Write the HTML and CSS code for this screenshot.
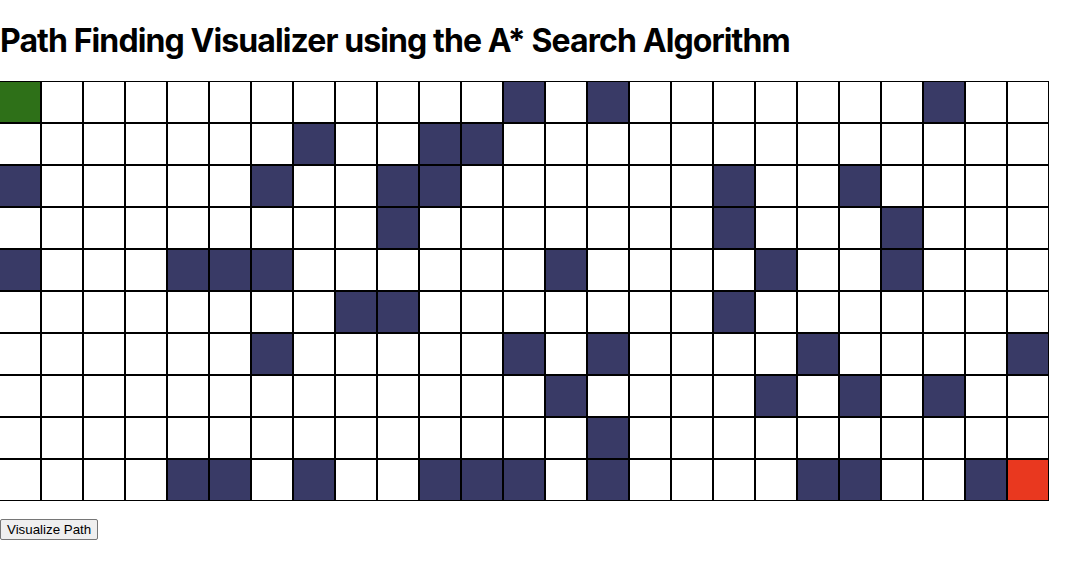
FILE: index.html
```html
<!DOCTYPE html>
<html>
<head>
<meta charset="utf-8">
<link rel="stylesheet" href="styles.css">
</head>
<body>
<h1 class="title">Path Finding Visualizer using the A* Search Algorithm</h1>
<div class="grid" id="grid"></div>
<div class="controls"><button class="btn">Visualize Path</button></div>
<script>
var walls = [
  [12,14,22],
  [7,10,11],
  [0,6,9,10,17,20],
  [9,17,21],
  [0,4,5,6,13,18,21],
  [8,9,17],
  [6,12,14,19,24],
  [13,18,20,22],
  [14],
  [4,5,7,10,11,12,14,19,20,23]
];
var g = document.getElementById('grid');
for (var r = 0; r < 10; r++) {
  var row = document.createElement('div');
  row.className = 'row';
  for (var c = 0; c < 25; c++) {
    var cell = document.createElement('div');
    cell.className = 'cell';
    if (r === 0 && c === 0) cell.className += ' start';
    else if (r === 9 && c === 24) cell.className += ' end';
    else if (walls[r].indexOf(c) >= 0) cell.className += ' wall';
    row.appendChild(cell);
  }
  g.appendChild(row);
}
</script>
</body>
</html>
```
FILE: styles.css
```css
body {
  margin: 0;
  background: #fff;
  font-family: "Liberation Sans", Arial, sans-serif;
}
.title {
  font-family: Inter, "Liberation Sans", sans-serif;
  font-weight: 700;
  font-size: 32px;
  letter-spacing: -0.9px;
  margin: 21.44px 0 20.6px;
  color: #000;
}
.grid {
  display: flex;
  flex-direction: column;
  margin-left: -1px;
}
.row {
  display: flex;
}
.cell {
  width: 40px;
  height: 40px;
  border: 1px solid #000;
  background: #fff;
  flex: none;
}
.cell.wall { background: #393a66; }
.cell.start { background: #2e7018; }
.cell.end { background: #e9381f; }
.controls {
  display: flex;
  margin-top: 18px;
}
.btn {
  font-family: "Liberation Sans", Arial, sans-serif;
  font-size: 13.333px;
  padding: 1px 6px;
  background: #efefef;
  border: 1px solid #767676;
  border-radius: 2px;
  color: #000;
  height: 21px;
}
```
